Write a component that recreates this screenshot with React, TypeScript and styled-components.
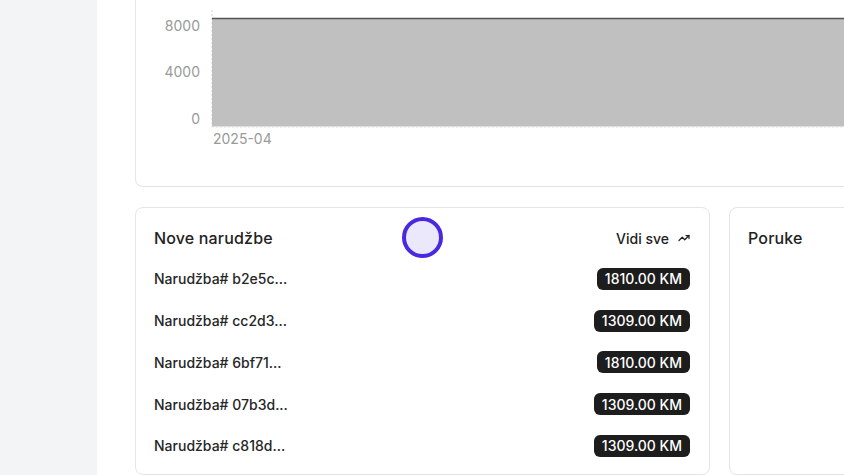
import React from 'react'
import styled, { createGlobalStyle } from 'styled-components'
import { TrendingUp } from 'lucide-react'

type Order = {
  id: string
  total: string
}

const orders: Order[] = [
  { id: 'b2e5c...', total: '1810.00 KM' },
  { id: 'cc2d3...', total: '1309.00 KM' },
  { id: '6bf71...', total: '1810.00 KM' },
  { id: '07b3d...', total: '1309.00 KM' },
  { id: 'c818d...', total: '1309.00 KM' },
]

const yTicks = [
  { label: '8000', y: 27 },
  { label: '4000', y: 73.5 },
  { label: '0', y: 120 },
]

const App = (): JSX.Element => {
  return (
    <>
      <GlobalStyle />
      <Page>
        <Sidebar />
        <Main>
          <ChartCard>
            <svg width="1168" height="160">
              <line x1="76" y1="10" x2="76" y2="127" stroke="#d4d4d4" strokeDasharray="2 2" />
              <rect x="76" y="18.5" width="1092" height="108" fill="#c0c0c0" />
              <line x1="76" y1="18.5" x2="1168" y2="18.5" stroke="#555" strokeWidth="1.5" />
              <line x1="76" y1="127" x2="1168" y2="127" stroke="#e0e0e0" strokeDasharray="2 2" />
              {yTicks.map((t) => (
                <AxisText key={t.label} x="64" y={t.y} textAnchor="end" dominantBaseline="middle">
                  {t.label}
                </AxisText>
              ))}
              <AxisText x="77" y="140" dominantBaseline="middle">
                2025-04
              </AxisText>
            </svg>
          </ChartCard>
          <CardRow>
            <Card>
              <CardHeader>
                <CardTitle>Nove narudžbe</CardTitle>
                <SeeAll>
                  Vidi sve
                  <TrendingUp size={12} strokeWidth={2.5} />
                </SeeAll>
              </CardHeader>
              {orders.map((o) => (
                <OrderRow key={o.id}>
                  <OrderName>Narudžba# {o.id}</OrderName>
                  <Badge>{o.total}</Badge>
                </OrderRow>
              ))}
            </Card>
            <Card>
              <CardHeader>
                <CardTitle>Poruke</CardTitle>
              </CardHeader>
            </Card>
          </CardRow>
        </Main>
        <Cursor />
      </Page>
    </>
  )
}

const GlobalStyle = createGlobalStyle`
  body {
    margin: 0;
    overflow: hidden;
    font-family: Inter, "Noto Sans", sans-serif;
    color: #262626;
  }
`

const Page = styled.div`
  position: relative;
  display: flex;
  width: 844px;
  height: 475px;
  overflow: hidden;
  background: #fff;
`

const Sidebar = styled.aside`
  width: 97px;
  flex-shrink: 0;
  background: #f3f4f6;
`

const Main = styled.main`
  flex: 1;
  min-width: 0;
  display: flex;
  flex-direction: column;
  gap: 20px;
  padding-left: 38px;
`

const ChartCard = styled.section`
  box-sizing: border-box;
  width: 1170px;
  height: 187px;
  border: 1px solid #e5e5e5;
  border-top: none;
  border-radius: 0 0 8px 8px;

  svg {
    display: block;
  }
`

const AxisText = styled.text`
  font-family: Inter, sans-serif;
  font-size: 14px;
  fill: #999;
`

const CardRow = styled.div`
  display: grid;
  grid-template-columns: 575px 575px;
  gap: 19px;
`

const Card = styled.section`
  box-sizing: border-box;
  height: 268px;
  border: 1px solid #e5e5e5;
  border-radius: 8px;
  padding: 10px 19px 7px 18px;
  display: flex;
  flex-direction: column;
`

const CardHeader = styled.div`
  height: 40px;
  display: flex;
  align-items: center;
  justify-content: space-between;
`

const CardTitle = styled.h3`
  margin: 0;
  font-size: 16px;
  font-weight: 500;
  letter-spacing: 0.01em;
  color: #222;
`

const SeeAll = styled.a`
  display: flex;
  align-items: center;
  gap: 9px;
  font-size: 14px;
  font-weight: 500;
  color: #222;
  cursor: pointer;
`

const OrderRow = styled.div`
  height: 41.75px;
  display: flex;
  align-items: center;
  justify-content: space-between;
`

const OrderName = styled.span`
  font-size: 14px;
  font-weight: 500;
  color: #262626;
`

const Badge = styled.span`
  height: 22px;
  display: inline-flex;
  align-items: center;
  padding: 0 8px;
  border-radius: 6px;
  background: #1d1d1d;
  color: #fff;
  font-size: 14px;
  font-weight: 500;
`

const Cursor = styled.div`
  position: absolute;
  left: 402px;
  top: 217px;
  box-sizing: border-box;
  width: 41px;
  height: 41px;
  border-radius: 50%;
  border: 4px solid #4a28e0;
  background: #ebe8fc;
  pointer-events: none;
`

export default App
